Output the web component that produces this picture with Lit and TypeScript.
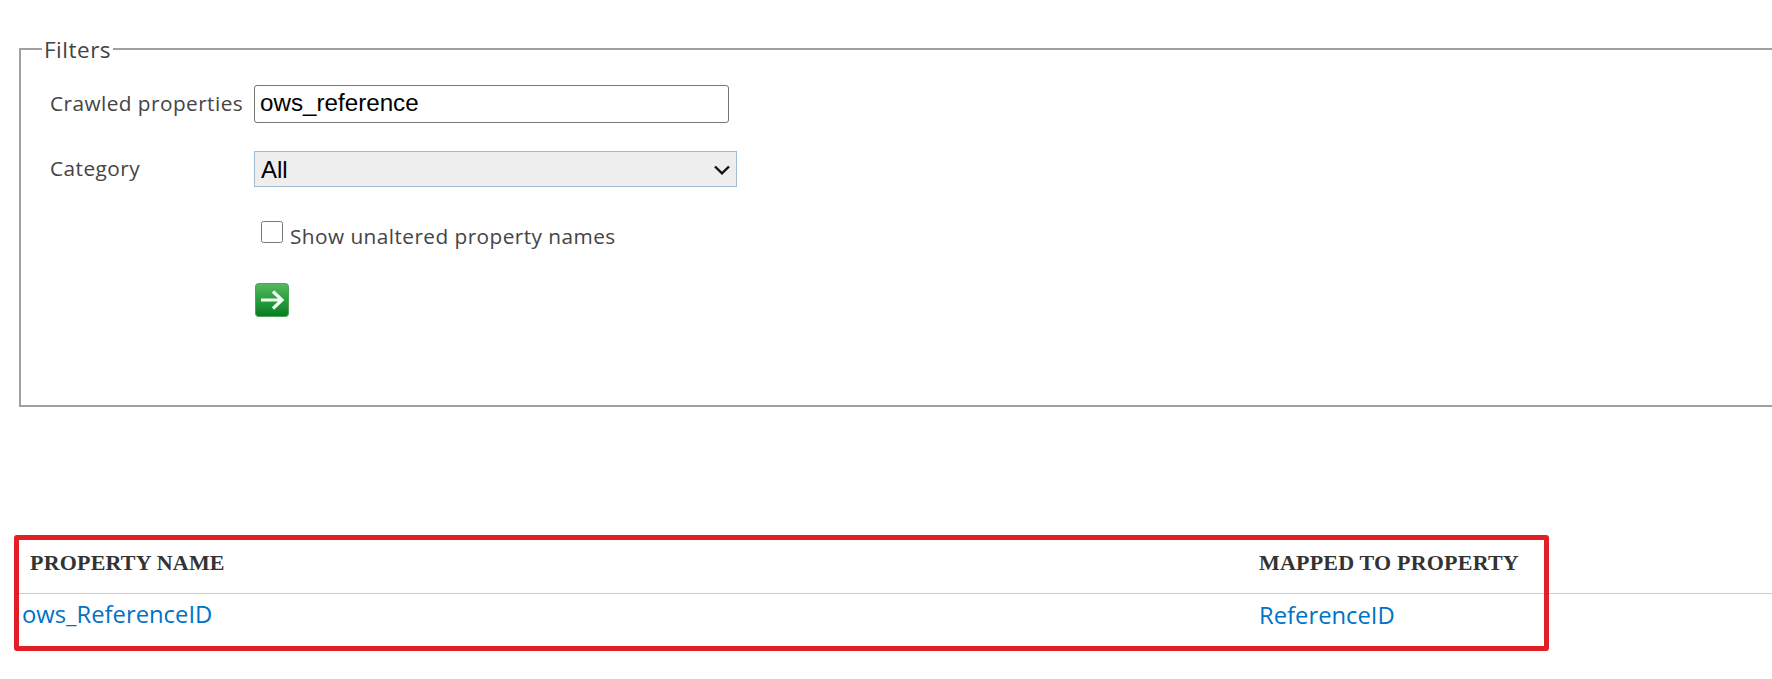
import { LitElement, html, css } from "lit";
import { customElement } from "lit/decorators.js";

@customElement("app-root")
export class AppRoot extends LitElement {
  static styles = css`
    :host { display: block; width: 1772px; height: 679px; overflow: hidden; background: #fff; position: relative; font-family: "Open Sans", "Noto Sans", sans-serif; color: #444; }
    .page { width: 1900px; padding: 34px 0 0 19px; box-sizing: border-box; }
    fieldset { margin: 0; padding: 0; height: 373px; box-sizing: border-box; border: 2px solid #a0a0a0; min-width: 0; }
    legend { padding: 2px 2px 0; margin-left: 21px; font-size: 22.5px; letter-spacing: 0.5px; line-height: 28px; color: #444; }
    .form { display: grid; grid-template-columns: 204px 1fr; align-items: center; margin: 21px 0 0 29px; }
    .lbl { font-size: 20.8px; line-height: 26px; letter-spacing: 0.44px; color: #444; white-space: nowrap; }
    .up { margin-bottom: 2px; }
    input[type=text] { box-sizing: border-box; width: 475px; height: 38px; margin: 0; padding: 0 5px 2px; border: 1px solid #767676; border-radius: 3px; font: 24.2px "Liberation Sans", Arial, sans-serif; color: #000; background: #fff; outline: none; }
    .sel { position: relative; width: 482.5px; height: 36px; }
    select { appearance: none; -webkit-appearance: none; display: block; box-sizing: border-box; width: 100%; height: 100%; margin: 0; padding: 0 6px; border: 1px solid #a3bbd1; border-radius: 0; background: #eee; font: 24px "Liberation Sans", Arial, sans-serif; color: #000; }
    .chev { position: absolute; left: 460px; top: 14px; width: 16px; height: 10px; pointer-events: none; }
    .gap1 { height: 28px; grid-column: 1 / 3; }
    .gap2 { height: 34px; grid-column: 1 / 3; }
    .gap3 { height: 34px; grid-column: 1 / 3; }
    .check { grid-column: 2; display: flex; align-items: flex-start; padding-left: 7px; }
    .check input { width: 22px; height: 22px; margin: 0 7px 0 0; }
    .check .lbl { padding-top: 2px; }
    .go { grid-column: 2; display: block; width: 34px; height: 34px; margin-left: 1px; }
    table { border-collapse: collapse; margin: 0; width: 1753px; table-layout: fixed; }
    .tbl { margin-top: 126px; }
    th { font: bold 22px "Liberation Serif", "Times New Roman", serif; color: #333; text-align: left; letter-spacing: 0.2px; height: 60px; padding: 0 0 0 11px; border-bottom: 1px solid #ccc; white-space: nowrap; }
    td { height: 40px; padding: 0; vertical-align: top; font-size: 23.8px; line-height: 42px; }
    th.m, td.m { width: 513px; padding-left: 0; }
    a { color: #0072c6; text-decoration: none; }
    td.f { padding-left: 3px; line-height: 40px; }
    .mark { position: absolute; left: 14px; top: 535px; width: 1535px; height: 116px; box-sizing: border-box; border: 5px solid #e21f26; border-radius: 3px; pointer-events: none; }
  `;

  render() {
    return html`
      <div class="page">
        <fieldset>
          <legend>Filters</legend>
          <div class="form">
            <span class="lbl up">Crawled properties</span>
            <input type="text" .value=${"ows_reference"} />
            <div class="gap1"></div>
            <span class="lbl up">Category</span>
            <div class="sel">
              <select><option>All</option></select>
              <svg class="chev" viewBox="0 0 16 10"><path d="M1 1.5L8 8.3L15 1.5" fill="none" stroke="#111" stroke-width="2.4" /></svg>
            </div>
            <div class="gap2"></div>
            <label class="check"><input type="checkbox" /><span class="lbl">Show unaltered property names</span></label>
            <div class="gap3"></div>
            <svg class="go" viewBox="0 0 34 34" aria-label="Go">
              <defs>
                <linearGradient id="g" x1="0" y1="0" x2="0" y2="1">
                  <stop offset="0" stop-color="#58b862" />
                  <stop offset="0.5" stop-color="#26a03c" />
                  <stop offset="1" stop-color="#0b7a22" />
                </linearGradient>
              </defs>
              <rect x="0.5" y="0.5" width="33" height="33" rx="3" fill="url(#g)" stroke="#4aa655" />
              <path d="M6 17H26M18 8.5L27 17L18 25.5" fill="none" stroke="#f4fff4" stroke-width="3.2" />
            </svg>
          </div>
        </fieldset>
        <div class="tbl">
          <table>
            <thead><tr><th class="n">PROPERTY NAME</th><th class="m">MAPPED TO PROPERTY</th></tr></thead>
            <tbody><tr><td class="f"><a href="#">ows_ReferenceID</a></td><td class="m"><a href="#">ReferenceID</a></td></tr></tbody>
          </table>
        </div>
      </div>
      <div class="mark"></div>
    `;
  }
}
